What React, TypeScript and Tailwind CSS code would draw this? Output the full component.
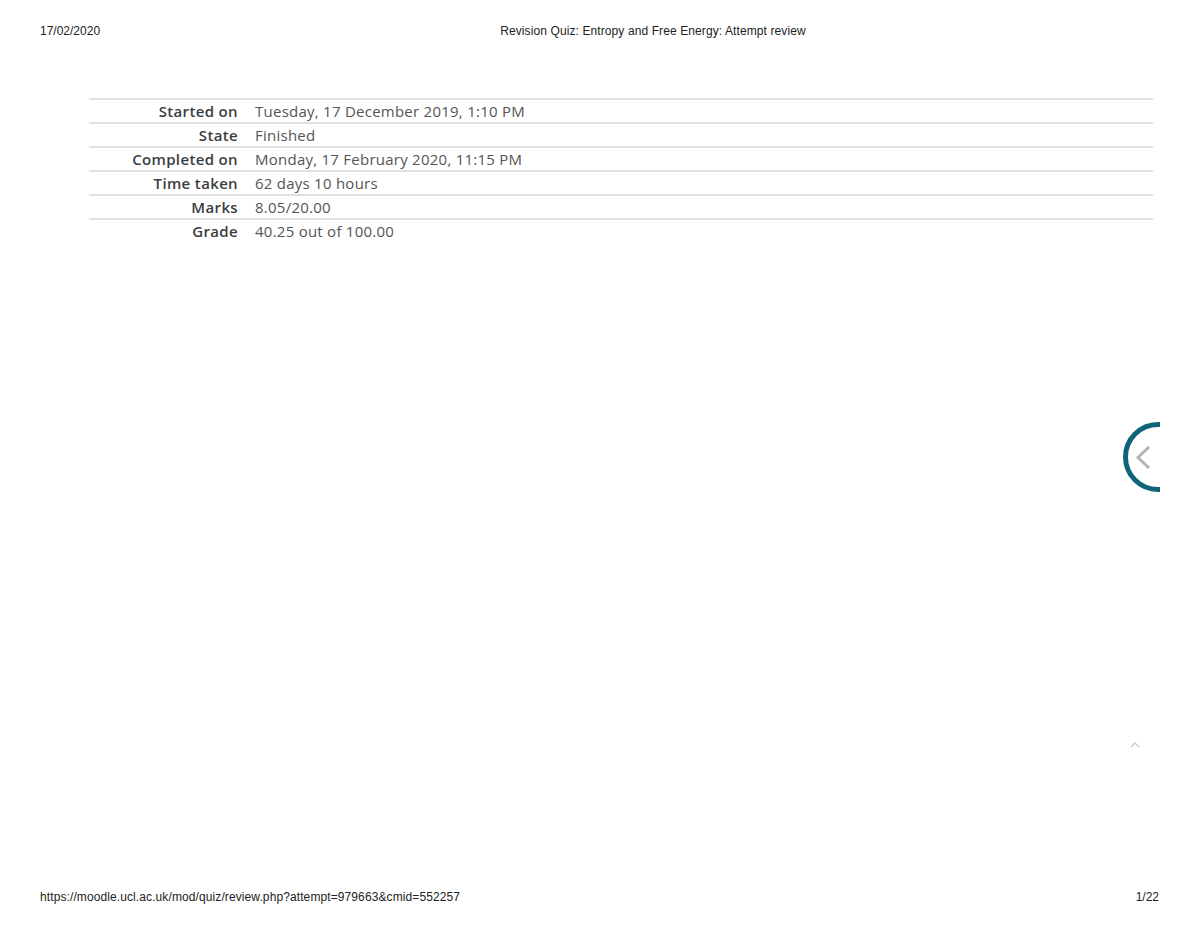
const rows: [string, string][] = [
  ["Started on", "Tuesday, 17 December 2019, 1:10 PM"],
  ["State", "Finished"],
  ["Completed on", "Monday, 17 February 2020, 11:15 PM"],
  ["Time taken", "62 days 10 hours"],
  ["Marks", "8.05/20.00"],
  ["Grade", "40.25 out of 100.00"],
];

const PrintHeader = () => (
  <div className="grid grid-cols-[1fr_auto_1fr] items-center px-10 pt-[23px] h-[38px] text-[12px] leading-[14px] text-[#222] font-['Liberation_Sans',Arial,sans-serif]">
    <span>17/02/2020</span>
    <span className="pl-[106px] tracking-[0.1px]">Revision Quiz: Entropy and Free Energy: Attempt review</span>
    <span />
  </div>
);

const PrintFooter = () => (
  <div className="flex items-center justify-between pl-10 pr-[41px] h-[14px] text-[12px] leading-[14px] text-[#222] font-['Liberation_Sans',Arial,sans-serif]">
    <span className="tracking-[0.1px]">https://moodle.ucl.ac.uk/mod/quiz/review.php?attempt=979663&amp;cmid=552257</span>
    <span>1/22</span>
  </div>
);

const SummaryTable = () => (
  <table className="mx-[89px] w-[1064px] border-collapse font-['Open_Sans',sans-serif] text-[15px]">
    <tbody>
      {rows.map(([label, value], i) => (
        <tr key={label} className={i < rows.length - 1 ? "border-y-2 border-[#dee2e6]" : "border-t-2 border-[#dee2e6]"}>
          <th className="w-[157px] pr-2 text-right font-semibold tracking-[0.35px] text-[#3a3d40] h-[22px] leading-[22px] p-0 whitespace-nowrap">
            {label}
          </th>
          <td className="pl-[9px] tracking-[0.25px] text-[#555] h-[22px] leading-[22px] p-0 whitespace-nowrap">{value}</td>
        </tr>
      ))}
    </tbody>
  </table>
);

const App = () => (
  <div className="relative w-[1200px] h-[926px] overflow-hidden bg-white flex flex-col">
    <PrintHeader />
    <div className="pt-[60px]">
      <SummaryTable />
    </div>
    <div className="flex-1" />
    <div className="pb-[22px]">
      <PrintFooter />
    </div>

    {/* drawer toggle, cut off at the page edge */}
    <div className="absolute left-[1120px] top-[419px] w-[40px] h-[76px] overflow-hidden">
      <svg width="80" height="76" viewBox="0 0 80 76">
        <circle cx="38" cy="38" r="32.5" fill="none" stroke="#0f6577" strokeWidth="5" />
        <path d="M29 28 L18 38.5 L29 49" fill="none" stroke="#b3b3b3" strokeWidth="3" strokeLinecap="butt" />
      </svg>
    </div>

    {/* back-to-top caret */}
    <svg className="absolute left-[1129px] top-[741px]" width="12" height="8" viewBox="0 0 12 8">
      <path d="M2 6 L6 2 L10 6" fill="none" stroke="#c8c8c8" strokeWidth="1.3" />
    </svg>
  </div>
);

export default App;
